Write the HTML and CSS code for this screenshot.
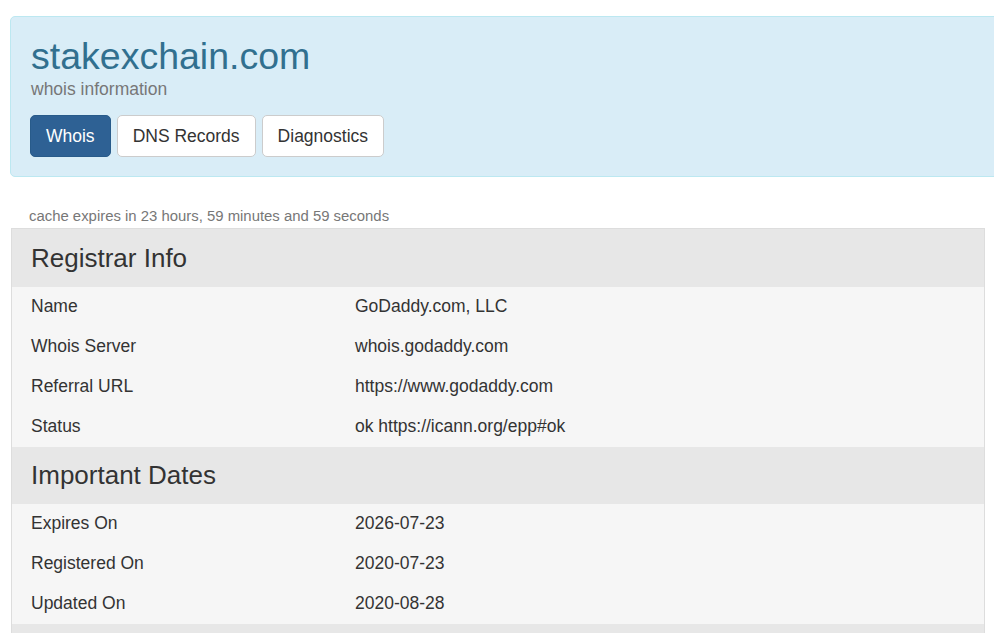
FILE: index.html
```html
<!DOCTYPE html>
<html>
<head>
<meta charset="utf-8">
<link rel="stylesheet" href="styles.css">
</head>
<body>
<div class="page">
  <div class="jumbo">
    <h1 class="title">stakexchain.com</h1>
    <p class="subtitle">whois information</p>
    <div class="tabs">
      <a class="btn btn-active">Whois</a>
      <a class="btn">DNS Records</a>
      <a class="btn">Diagnostics</a>
    </div>
  </div>
  <p class="cache">cache expires in 23 hours, 59 minutes and 59 seconds</p>
  <div class="table">
    <div class="section section-first">Registrar Info</div>
    <div class="row"><span class="key">Name</span><span class="val">GoDaddy.com, LLC</span></div>
    <div class="row"><span class="key">Whois Server</span><span class="val">whois.godaddy.com</span></div>
    <div class="row"><span class="key">Referral URL</span><span class="val">https://www.godaddy.com</span></div>
    <div class="row"><span class="key">Status</span><span class="val">ok https://icann.org/epp#ok</span></div>
    <div class="section">Important Dates</div>
    <div class="row"><span class="key">Expires On</span><span class="val">2026-07-23</span></div>
    <div class="row"><span class="key">Registered On</span><span class="val">2020-07-23</span></div>
    <div class="row"><span class="key">Updated On</span><span class="val">2020-08-28</span></div>
    <div class="section section-empty"></div>
  </div>
</div>
</body>
</html>
```

FILE: styles.css
```css
html, body {
  margin: 0;
  padding: 0;
  background: #fff;
  overflow: hidden;
}
body {
  font-family: "Liberation Sans", Arial, sans-serif;
  color: #333;
}
.page {
  padding: 16px 0 0 10px;
  width: 1010px;
}
.jumbo {
  background: #d9edf7;
  border: 1px solid #bce8f1;
  border-radius: 5px;
  padding: 18px 19px 20px 19px;
  height: 121px;
}
.title {
  margin: 0 0 0 1px;
  font-size: 37.5px;
  font-weight: normal;
  line-height: 42px;
  color: #31708f;
}
.subtitle {
  margin: 1px 0 0 1px;
  font-size: 17.5px;
  line-height: 23px;
  color: #777;
}
.tabs {
  display: flex;
  gap: 6px;
  margin-top: 14px;
}
.btn {
  display: block;
  box-sizing: border-box;
  height: 42px;
  font-size: 17.5px;
  line-height: 24px;
  padding: 8px 15px;
  border: 1px solid #ccc;
  border-radius: 5px;
  background: #fff;
  color: #333;
}
.btn-active {
  background: #2e6194;
  border-color: #285b8a;
  color: #fff;
}
.cache {
  margin: 30px 0 2px 19px;
  font-size: 14.9px;
  line-height: 19px;
  color: #777;
}
.table {
  width: 972px;
  margin-left: 1px;
  border: 1px solid #ddd;
  background: #f6f6f6;
}
.section {
  background: #e7e7e7;
  font-size: 26px;
  line-height: 57px;
  height: 57px;
  padding-left: 19px;
  color: #333;
}
.section-first {
  height: 58px;
  line-height: 59px;
}
.row {
  display: flex;
  height: 40px;
  line-height: 38px;
  font-size: 17.5px;
}
.key {
  width: 324px;
  padding-left: 19px;
}
.val {
  flex: 1;
}
```
